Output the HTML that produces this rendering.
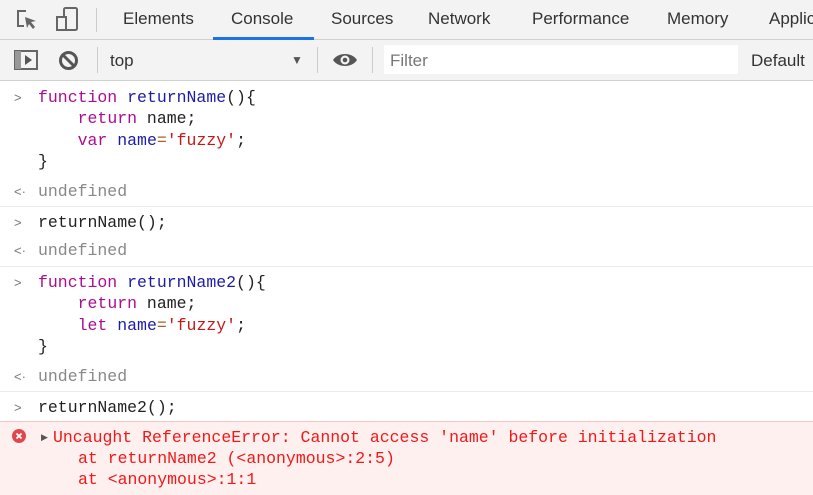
<!DOCTYPE html>
<html><head><meta charset="utf-8"><style>
*{margin:0;padding:0;box-sizing:border-box}
body{width:813px;height:495px;overflow:hidden;background:#fff;font-family:"Liberation Sans",sans-serif;position:relative}
.tabs{position:absolute;left:0;top:0;width:813px;height:40px;background:#f3f3f3;border-bottom:1px solid #d0d0d0}
.tab{position:absolute;top:9px;font-size:17px;color:#333}
.tb{position:absolute;left:0;top:40px;width:813px;height:41px;background:#f3f3f3;border-bottom:1px solid #d0d0d0}
.sep{position:absolute;width:1px;background:#ccc}
.m{font-family:"Liberation Mono",monospace;font-size:16.5px;position:absolute;white-space:pre;line-height:21.3px;color:#222}
.k{color:#aa0d91}.v{color:#1c1ca8}.s{color:#c41a16}.o{color:#a65f2a}
.g{color:#888}
.hr{position:absolute;left:0;width:813px;height:1px;background:#ececec}
.ar{position:absolute;font-size:13px;color:#777;font-family:"Liberation Sans",sans-serif}
.e{color:#f01818}
</style></head><body>
<div class="tabs">
<svg style="position:absolute;left:16px;top:9px" width="22" height="22" viewBox="0 0 22 22"><path d="M10 2H2v15h6" fill="none" stroke="#666" stroke-width="2"/><path d="M9 8l11 4-5 1 4 5-2 2-4-5-2 4z" fill="#666"/></svg>
<svg style="position:absolute;left:55px;top:6px" width="26" height="26" viewBox="0 0 26 26"><rect x="9" y="2" width="13" height="22" rx="1.5" fill="none" stroke="#666" stroke-width="2"/><rect x="2" y="11" width="9" height="13" fill="#f3f3f3" stroke="#666" stroke-width="2"/></svg>
<div class="sep" style="left:96px;top:8px;height:24px"></div>
<div class="tab" style="left:123px">Elements</div>
<div class="tab" style="left:231px">Console</div>
<div style="position:absolute;left:213px;top:37px;width:101px;height:3px;background:#1a73e8"></div>
<div class="tab" style="left:331px">Sources</div>
<div class="tab" style="left:428px">Network</div>
<div class="tab" style="left:532px">Performance</div>
<div class="tab" style="left:667px">Memory</div>
<div class="tab" style="left:769px">Applic</div>
</div>
<div class="tb">
<svg style="position:absolute;left:14px;top:10px" width="24" height="20" viewBox="0 0 24 20"><rect x="1" y="1" width="22" height="18" fill="none" stroke="#666" stroke-width="2"/><rect x="1" y="1" width="6" height="18" fill="#999"/><path d="M11 5l7 5-7 5z" fill="#555"/></svg>
<svg style="position:absolute;left:58px;top:10px" width="21" height="21" viewBox="0 0 21 21"><circle cx="10.5" cy="10.5" r="8" fill="none" stroke="#555" stroke-width="3"/><path d="M5 5l11 11" stroke="#555" stroke-width="3"/></svg>
<div class="sep" style="left:97px;top:7px;height:26px"></div>
<div style="position:absolute;left:110px;top:11px;font-size:17px;color:#333">top</div>
<div style="position:absolute;left:291px;top:13px;font-size:12px;color:#555">▼</div>
<div class="sep" style="left:317px;top:7px;height:26px"></div>
<svg style="position:absolute;left:332px;top:11px" width="26" height="18" viewBox="0 0 26 18"><path d="M1 9C6 1 20 1 25 9C20 17 6 17 1 9z" fill="#555"/><circle cx="13" cy="9" r="4.5" fill="#f3f3f3"/><circle cx="13" cy="9" r="2.3" fill="#555"/></svg>
<div class="sep" style="left:372px;top:7px;height:26px"></div>
<div style="position:absolute;left:384px;top:5px;width:354px;height:29px;background:#fff"></div>
<div style="position:absolute;left:390px;top:11px;font-size:17px;color:#777">Filter</div>
<div style="position:absolute;left:751px;top:11px;font-size:17px;color:#333">Default</div>
</div>

<div class="ar" style="left:14px;top:90px">&gt;</div>
<div class="m" style="left:38px;top:87px"><span class="k">function</span> <span class="v">returnName</span>(){
    <span class="k">return</span> name;
    <span class="k">var</span> <span class="v">name</span><span class="o">=</span><span class="s">'fuzzy'</span>;
}</div>
<div class="ar" style="left:14px;top:184px">&lt;·</div>
<div class="m g" style="left:38px;top:181px">undefined</div>
<div class="hr" style="top:206px"></div>
<div class="ar" style="left:14px;top:215px">&gt;</div>
<div class="m" style="left:38px;top:212px">returnName();</div>
<div class="ar" style="left:14px;top:243px">&lt;·</div>
<div class="m g" style="left:38px;top:240px">undefined</div>
<div class="hr" style="top:266px"></div>
<div class="ar" style="left:14px;top:275px">&gt;</div>
<div class="m" style="left:38px;top:272px"><span class="k">function</span> <span class="v">returnName2</span>(){
    <span class="k">return</span> name;
    <span class="k">let</span> <span class="v">name</span><span class="o">=</span><span class="s">'fuzzy'</span>;
}</div>
<div class="ar" style="left:14px;top:369px">&lt;·</div>
<div class="m g" style="left:38px;top:366px">undefined</div>
<div class="hr" style="top:391px"></div>
<div class="ar" style="left:14px;top:400px">&gt;</div>
<div class="m" style="left:38px;top:397px">returnName2();</div>
<div style="position:absolute;left:0;top:421px;width:813px;height:74px;background:#fff0f0;border-top:1px solid #f5c6c6"></div>
<svg style="position:absolute;left:12px;top:429px" width="14" height="14" viewBox="0 0 14 14"><circle cx="7" cy="7" r="7" fill="#e0474c"/><path d="M4.5 4.5l5 5M9.5 4.5l-5 5" stroke="#fff" stroke-width="1.8"/></svg>
<div style="position:absolute;left:41px;top:432px;font-size:9px;color:#555">▶</div>
<div class="m e" style="left:53px;top:427px">Uncaught ReferenceError: Cannot access 'name' before initialization</div>
<div class="m e" style="left:78px;top:448px">at returnName2 (&lt;anonymous&gt;:2:5)
at &lt;anonymous&gt;:1:1</div>
</body></html>
